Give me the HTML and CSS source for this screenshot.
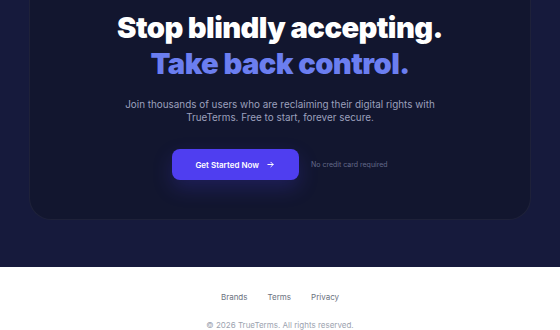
FILE: index.html
```html
<!DOCTYPE html>
<html lang="en">
<head>
    <meta charset="UTF-8">
    <meta name="viewport" content="width=device-width, initial-scale=1.0">
    <title>TrueTerms - Take back control</title>
    <link rel="stylesheet" href="styles.css">
</head>
<body>
    <section class="cta">
        <div class="cta-card">
            <h1 class="cta-title">
                <span class="line">Stop blindly accepting.</span>
                <span class="line accent">Take back control.</span>
            </h1>
            <p class="cta-text">Join thousands of users who are reclaiming their digital rights with TrueTerms. Free to start, forever secure.</p>
            <div class="cta-actions">
                <a href="#" class="btn-primary">
                    Get Started Now
                    <svg class="arrow" width="9" height="9" viewBox="0 0 24 24" fill="none" stroke="currentColor" stroke-width="2.6" stroke-linecap="round" stroke-linejoin="round">
                        <path d="M5 12h14"/>
                        <path d="M13 6l6 6-6 6"/>
                    </svg>
                </a>
                <span class="cta-note">No credit card required</span>
            </div>
        </div>
    </section>

    <footer class="footer">
        <nav class="footer-links">
            <a href="#">Brands</a>
            <a href="#">Terms</a>
            <a href="#">Privacy</a>
        </nav>
        <p class="copyright">&copy; 2026 TrueTerms. All rights reserved.</p>
    </footer>
</body>
</html>
```

FILE: styles.css
```css
/* Base */
body, html {
    margin: 0;
    padding: 0;
    font-family: 'Inter', 'Noto Sans', sans-serif;
    background-color: #161a3c;
}

/* CTA section */
.cta {
    padding: 0 29px 47px;
}

.cta-card {
    margin-top: -60px;
    padding: 70px 20px 39px;
    background-color: #12162f;
    border: 1px solid rgba(255, 255, 255, 0.05);
    border-top: none;
    border-radius: 0 0 22px 22px;
    text-align: center;
}

.cta-title {
    margin: 0;
    font-size: 29.2px;
    line-height: 36px;
    font-weight: 900;
    letter-spacing: -0.02em;
    color: #ffffff;
}

.cta-title .line {
    display: block;
}

.cta-title .accent {
    color: #6b7ef0;
}

.cta-text {
    margin: 16px auto 0;
    max-width: 330px;
    font-size: 9.9px;
    line-height: 13px;
    color: #9ca0bd;
}

.cta-actions {
    margin-top: 25px;
    display: flex;
    justify-content: center;
    align-items: center;
    gap: 12px;
}

.btn-primary {
    display: flex;
    align-items: center;
    gap: 7px;
    height: 31px;
    padding: 0 24px 0 23px;
    background-color: #4f3ef0;
    color: #ffffff;
    font-size: 8px;
    font-weight: 600;
    text-decoration: none;
    border-radius: 8px;
    box-shadow: 0 8px 20px rgba(79, 62, 240, 0.22);
}

.cta-note {
    font-size: 7px;
    color: #646a8a;
}

/* Footer */
.footer {
    background-color: #ffffff;
    padding: 24px 0 4px;
    text-align: center;
}

.footer-links {
    display: flex;
    justify-content: center;
    gap: 20px;
}

.footer-links a {
    font-size: 8px;
    line-height: 12px;
    color: #6b7280;
    text-decoration: none;
}

.copyright {
    margin: 16px 0 0;
    font-size: 8px;
    line-height: 12px;
    color: #9ca3af;
}
```
